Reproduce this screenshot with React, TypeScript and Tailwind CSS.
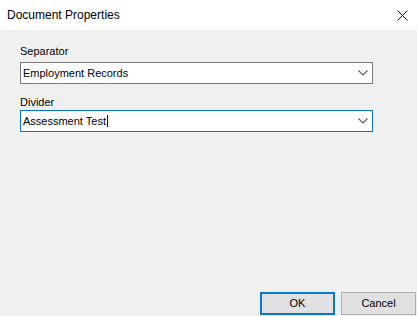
import React from "react";

const Chevron = () => (
  <svg width="10" height="6" viewBox="0 0 10 6" className="shrink-0">
    <polyline
      points="0.5,0.5 5,5 9.5,0.5"
      fill="none"
      stroke="#5a5a5a"
      strokeWidth="1.1"
    />
  </svg>
);

const Combo = ({ value, focused }: { value: string; focused?: boolean }) => (
  <div
    className={
      "flex h-[22px] w-[353px] items-center border bg-white pl-[2px] pr-[4px] " +
      (focused ? "border-[#0078d7]" : "border-[#7a7a7a]")
    }
  >
    <span className="flex-1 text-[11px] leading-[15px] text-black">
      {value}
      {focused && (
        <span className="ml-[1px] inline-block h-[12px] w-[1px] translate-y-[2px] bg-black" />
      )}
    </span>
    <Chevron />
  </div>
);

export default function App() {
  return (
    <div
      className="flex h-[316px] w-[417px] flex-col bg-[#f0f0f0]"
      style={{ fontFamily: '"Liberation Sans", Arial, sans-serif' }}
    >
      <div className="flex h-[30px] items-center justify-between bg-white pl-[7px] pr-[9px]">
        <span className="text-[12px] text-black">Document Properties</span>
        <svg width="11" height="11" viewBox="0 0 11 11">
          <path d="M0.5 0.5 L10.5 10.5 M10.5 0.5 L0.5 10.5" stroke="#111" strokeWidth="1" />
        </svg>
      </div>

      <div className="flex flex-1 flex-col px-[20px] pt-[14px]">
        <label className="text-[11px] leading-[15px] text-black">Separator</label>
        <div className="mt-[3px]">
          <Combo value="Employment Records" />
        </div>
        <label className="mt-[11px] text-[11px] leading-[15px] text-black">Divider</label>
        <div>
          <Combo value="Assessment Test" focused />
        </div>
      </div>

      <div className="flex justify-end gap-[6px] pb-[1px] pr-[1px]">
        <button className="flex h-[23px] w-[75px] items-center justify-center border-2 border-[#0078d7] bg-[#e1e1e1] text-[11px] text-black">
          OK
        </button>
        <button className="flex h-[23px] w-[75px] items-center justify-center border border-[#adadad] bg-[#e1e1e1] text-[11px] text-black">
          Cancel
        </button>
      </div>
    </div>
  );
}
